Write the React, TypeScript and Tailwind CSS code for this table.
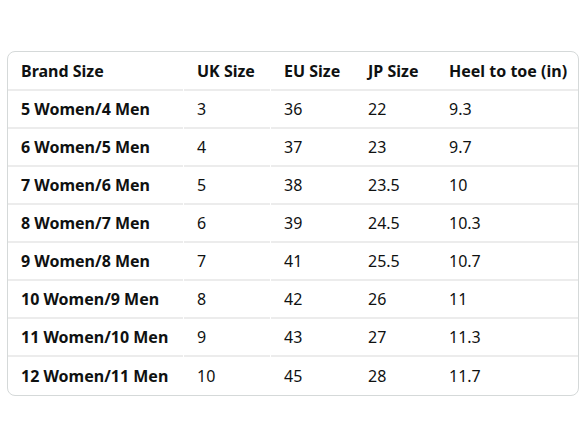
const rows = [
  ["5 Women/4 Men", "3", "36", "22", "9.3"],
  ["6 Women/5 Men", "4", "37", "23", "9.7"],
  ["7 Women/6 Men", "5", "38", "23.5", "10"],
  ["8 Women/7 Men", "6", "39", "24.5", "10.3"],
  ["9 Women/8 Men", "7", "41", "25.5", "10.7"],
  ["10 Women/9 Men", "8", "42", "26", "11"],
  ["11 Women/10 Men", "9", "43", "27", "11.3"],
  ["12 Women/11 Men", "10", "45", "28", "11.7"],
];

const header = ["Brand Size", "UK Size", "EU Size", "JP Size", "Heel to toe (in)"];

const widths = ["w-[175px]", "w-[86px]", "w-[84px]", "w-[81px]", "flex-1"];

function Row({ cells, head, last }: { cells: string[]; head?: boolean; last?: boolean }) {
  return (
    <div className={`flex ${head ? "h-[39px]" : "h-[38px]"}`}>
      {cells.map((c, i) => (
        <div
          key={i}
          className={`${widths[i]} flex items-center pl-[13px] ${i === 1 || i === 2 ? "ml-px" : ""} ${
            last ? "" : "border-b-2 border-[#ececec]"
          } ${head || i === 0 ? "font-bold" : "font-normal"}`}
        >
          {c}
        </div>
      ))}
    </div>
  );
}

export default function App() {
  return (
    <div
      className="w-[588px] h-[441px] bg-white pt-[51px] pl-[7px] text-[16px] text-[#0f1111]"
      style={{ fontFamily: '"Noto Sans", sans-serif' }}
    >
      <div className="w-[572px] rounded-lg border border-[#d5d9d9] overflow-hidden">
        <Row cells={header} head />
        {rows.map((r, i) => (
          <Row key={i} cells={r} last={i === rows.length - 1} />
        ))}
      </div>
    </div>
  );
}
